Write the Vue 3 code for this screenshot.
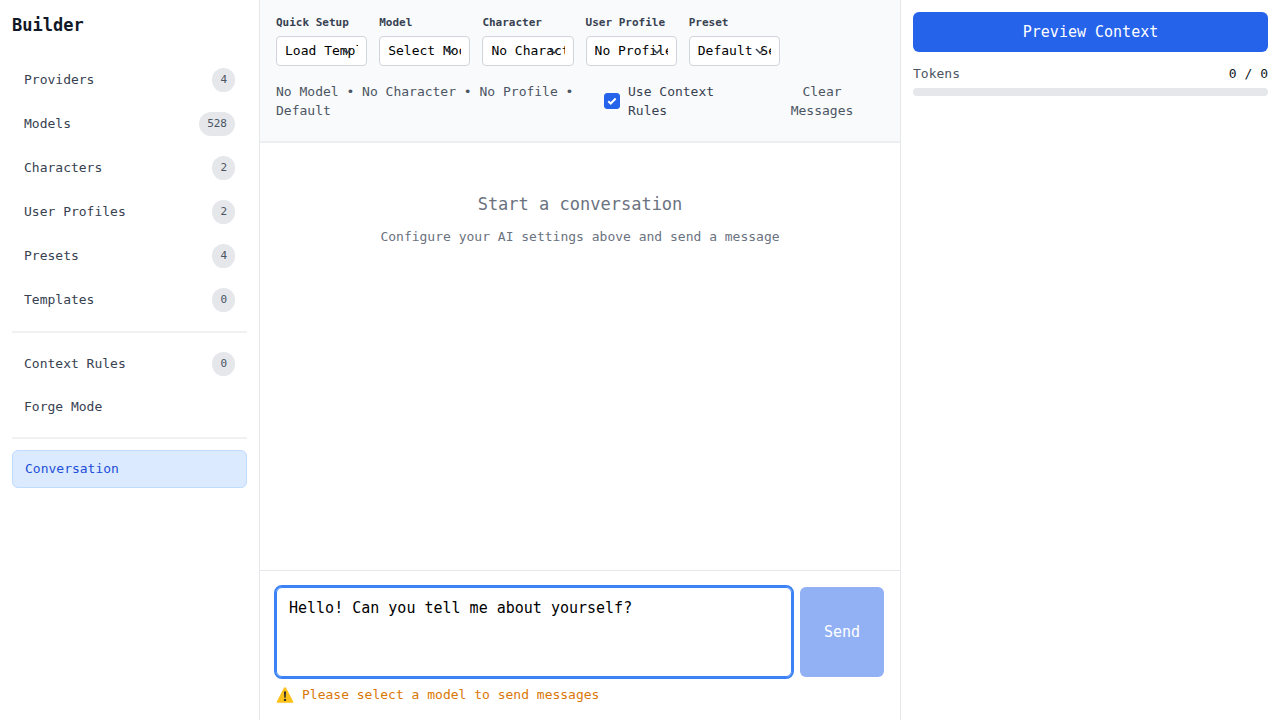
<script setup>
import { ref } from 'vue'

const library = [
  { name: 'Providers', count: 4 },
  { name: 'Models', count: 528 },
  { name: 'Characters', count: 2 },
  { name: 'User Profiles', count: 2 },
  { name: 'Presets', count: 4 },
  { name: 'Templates', count: 0 },
]

const setup = [
  { id: 'template', label: 'Quick Setup', option: 'Load Template...' },
  { id: 'model', label: 'Model', option: 'Select Model' },
  { id: 'character', label: 'Character', option: 'No Character' },
  { id: 'profile', label: 'User Profile', option: 'No Profile' },
  { id: 'preset', label: 'Preset', option: 'Default Settings' },
]

const useRules = ref(true)
const message = ref('Hello! Can you tell me about yourself?')
</script>

<template>
  <div class="app">
    <aside class="sidebar">
      <h1>Builder</h1>
      <nav>
        <div class="group">
          <button v-for="item in library" :key="item.name" type="button" class="item">
            <span>{{ item.name }}</span>
            <span class="badge">{{ item.count }}</span>
          </button>
        </div>
        <div class="group divided">
          <button type="button" class="item">
            <span>Context Rules</span>
            <span class="badge">0</span>
          </button>
          <button type="button" class="item plain">Forge Mode</button>
        </div>
        <div class="group divided">
          <button type="button" class="item active">Conversation</button>
        </div>
      </nav>
    </aside>

    <main class="main">
      <header class="toolbar">
        <div class="fields">
          <div v-for="field in setup" :key="field.id" class="field">
            <label :for="field.id">{{ field.label }}</label>
            <div class="picker">
              <select :id="field.id">
                <option>{{ field.option }}</option>
              </select>
              <svg class="chevron" viewBox="0 0 10 6" aria-hidden="true">
                <path d="M1 1l4 4 4-4" />
              </svg>
            </div>
          </div>
        </div>
        <div class="status">
          <p class="summary">No Model • No Character • No Profile • Default</p>
          <label class="rules">
            <span class="box">
              <input v-model="useRules" type="checkbox" />
              <svg v-if="useRules" viewBox="0 0 16 16" aria-hidden="true">
                <path d="M4.3 8.200l2.400 2.300 5-5" />
              </svg>
            </span>
            <span>Use Context Rules</span>
          </label>
          <button type="button" class="clear">Clear Messages</button>
        </div>
      </header>

      <section class="messages">
        <h2>Start a conversation</h2>
        <p>Configure your AI settings above and send a message</p>
      </section>

      <footer class="composer">
        <div class="row">
          <textarea v-model="message" aria-label="Message"></textarea>
          <button type="button" class="send" disabled>Send</button>
        </div>
        <p class="warning">
          <svg viewBox="0 0 18 18" aria-hidden="true">
            <path class="sign" d="M9 1.2c.5 0 .8.2 1 .6l7.2 13.6c.4.8 0 1.4-.8 1.4H1.6c-.8 0-1.2-.6-.8-1.4L8 1.8c.2-.4.5-.6 1-.6z" />
            <path class="mark" d="M7.9 5.4h2.2l-.4 6.3H8.3z" />
            <circle class="mark" cx="9" cy="13.9" r="1.2" />
          </svg>
          <span>Please select a model to send messages</span>
        </p>
      </footer>
    </main>

    <aside class="context">
      <button type="button" class="preview">Preview Context</button>
      <div class="tokens">
        <span>Tokens</span>
        <span class="total">0 / 0</span>
      </div>
      <div class="track" role="progressbar" aria-label="Tokens" aria-valuenow="0"></div>
    </aside>
  </div>
</template>

<style>
body {
  margin: 0;
  background: #ffffff;
}
</style>

<style scoped>
.app,
.app * {
  box-sizing: border-box;
}

.app {
  display: grid;
  grid-template-columns: 260px minmax(0, 1fr) 380px;
  min-height: 100vh;
  color: #111827;
  font: 13px/20px "DejaVu Sans Mono", "Liberation Mono", monospace;
}

button,
select,
textarea {
  margin: 0;
  font: inherit;
}

h1,
h2,
p {
  margin: 0;
}

.sidebar {
  padding: 12px;
  border-right: 1px solid #e5e7eb;
}

h1 {
  margin-bottom: 22px;
  font-size: 17px;
  line-height: 26px;
}

.group {
  display: flex;
  flex-direction: column;
  gap: 4px;
}

.divided {
  margin-top: 11px;
  padding-top: 11px;
  border-top: 2px solid #f0f1f3;
}

.item {
  display: flex;
  align-items: center;
  justify-content: space-between;
  height: 40px;
  padding: 0 12px;
  border: 0;
  border-radius: 6px;
  background: transparent;
  color: #374151;
  text-align: left;
}

.plain {
  height: 38px;
}

.active {
  height: 38px;
  border: 1px solid #bfdbfe;
  background: #dbeafe;
  color: #1d4ed8;
}

.badge {
  padding: 2px 8px;
  border-radius: 12px;
  background: #e5e7eb;
  color: #4b5563;
  font-size: 11px;
}

.main {
  display: flex;
  flex-direction: column;
}

.toolbar {
  padding: 14px 16px 21px;
  border-bottom: 2px solid #eceef1;
  background: #f9fafb;
}

.fields {
  display: flex;
  gap: 12px;
}

.field {
  width: 15%;
}

.field label {
  display: block;
  margin-bottom: 4px;
  color: #374151;
  font-size: 11px;
  font-weight: 700;
  line-height: 18px;
  white-space: nowrap;
}

.picker {
  position: relative;
}

select {
  display: block;
  width: 100%;
  height: 30px;
  padding: 0 8px;
  border: 1px solid #d1d5db;
  border-radius: 4px;
  background: #ffffff;
  color: #000000;
  appearance: none;
  text-overflow: clip;
}

.chevron {
  position: absolute;
  top: 12px;
  right: 15px;
  width: 10px;
  height: 6px;
  fill: none;
  stroke: #374151;
  stroke-width: 1.5;
  pointer-events: none;
}

.status {
  display: flex;
  align-items: center;
  margin-top: 16px;
  line-height: 19px;
}

.summary {
  flex: 1;
  color: #4b5563;
}

.rules {
  display: flex;
  align-items: center;
  gap: 8px;
  width: 140px;
  margin-left: 16px;
  color: #374151;
}

.box {
  position: relative;
  flex: none;
  width: 16px;
  height: 16px;
}

.box input {
  display: block;
  width: 16px;
  height: 16px;
  margin: 0;
  border: 1px solid #d1d5db;
  border-radius: 3px;
  background: #ffffff;
  appearance: none;
}

.box input:checked {
  border-color: #2563eb;
  background: #2563eb;
}

.box svg {
  position: absolute;
  inset: 0;
  fill: none;
  stroke: #ffffff;
  stroke-width: 2;
  pointer-events: none;
}

.clear {
  width: 124px;
  margin-left: 16px;
  padding: 0 24px;
  border: 0;
  background: transparent;
  color: #4b5563;
}

.messages {
  flex: 1;
  padding: 48px 16px;
  color: #6b7280;
  text-align: center;
}

h2 {
  margin-bottom: 10px;
  font-size: 17px;
  font-weight: 400;
  line-height: 26px;
}

.composer {
  padding: 16px 16px 15px;
  border-top: 1px solid #e5e7eb;
}

.row {
  display: flex;
  gap: 8px;
}

textarea {
  display: block;
  flex: 1;
  height: 90px;
  padding: 8px 12px;
  border: 1px solid #3b82f6;
  border-radius: 6px;
  outline: 2px solid #3b82f6;
  background: #ffffff;
  color: #000000;
  font-size: 15px;
  line-height: 24px;
  resize: none;
}

.send {
  width: 84px;
  border: 0;
  border-radius: 6px;
  background: #92b1f5;
  color: #ffffff;
  font-size: 15px;
}

.warning {
  display: flex;
  align-items: center;
  gap: 8px;
  margin-top: 8px;
  color: #d97706;
}

.warning svg {
  width: 18px;
  height: 18px;
}

.sign {
  fill: #fcc21b;
}

.mark {
  fill: #2f2f2f;
}

.context {
  padding: 12px;
  border-left: 1px solid #e5e7eb;
}

.preview {
  display: block;
  width: 100%;
  height: 40px;
  border: 0;
  border-radius: 6px;
  background: #2563eb;
  color: #ffffff;
  font-size: 15px;
}

.tokens {
  display: flex;
  justify-content: space-between;
  margin: 12px 0 4px;
  color: #4b5563;
}

.total {
  color: #111827;
}

.track {
  height: 8px;
  border-radius: 4px;
  background: #e5e7eb;
}
</style>
